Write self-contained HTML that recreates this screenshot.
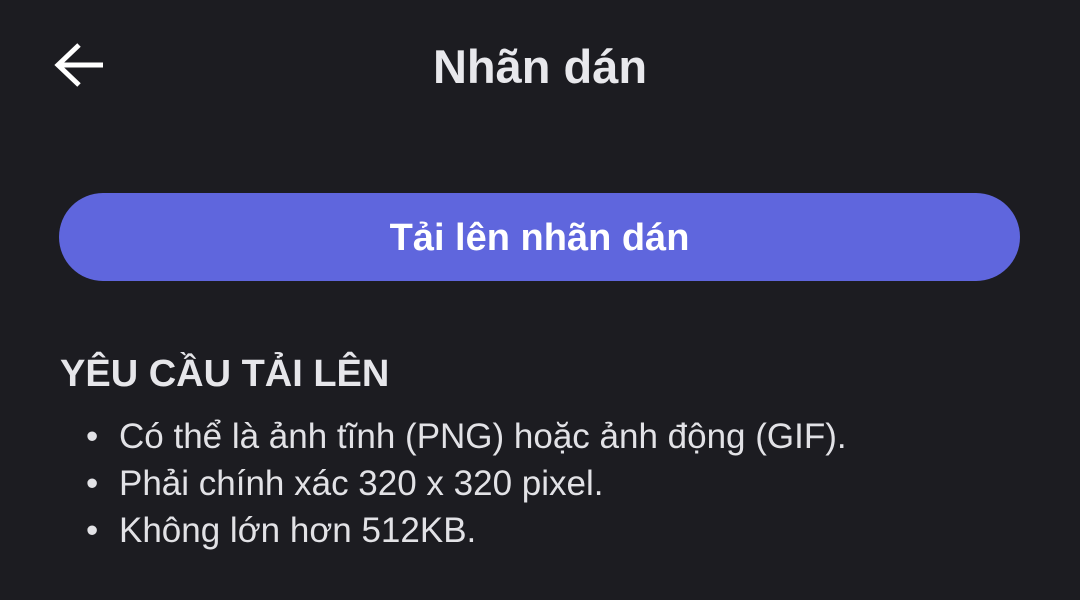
<!DOCTYPE html>
<html><head><meta charset="utf-8"><style>
html,body{margin:0;padding:0;background:#1c1c21;width:1080px;height:600px;overflow:hidden;font-family:"Liberation Sans",sans-serif;color:#e6e6ea}
.t{position:absolute;left:0;width:1080px;top:39px;text-align:center;font-weight:bold;font-size:47px;line-height:56px;color:#e8e8ec}
.b{position:absolute;left:59px;top:193px;width:961px;height:88px;border-radius:44px;background:#5f66dd;color:#fff;font-size:38px;line-height:90px;text-align:center;font-weight:bold}
.h{position:absolute;left:60px;top:350px;font-weight:bold;font-size:38px;line-height:48px;color:#e6e6ea}
.l{position:absolute;left:86px;top:413px;font-size:35px;line-height:47px;color:#e2e2e6}
.l div span{display:inline-block;width:33px}
</style></head><body>
<svg style="position:absolute;left:50px;top:38px" width="60" height="56" viewBox="0 0 60 56">
<path d="M53 27H10M29 7L8 27L29 47" fill="none" stroke="#fff" stroke-width="5"/>
</svg>
<div class="t">Nhãn dán</div>
<div class="b">Tải lên nhãn dán</div>
<div class="h">YÊU CẦU TẢI LÊN</div>
<div class="l">
<div><span>•</span>Có thể là ảnh tĩnh (PNG) hoặc ảnh động (GIF).</div>
<div><span>•</span>Phải chính xác 320 x 320 pixel.</div>
<div><span>•</span>Không lớn hơn 512KB.</div>
</div>
</body></html>
